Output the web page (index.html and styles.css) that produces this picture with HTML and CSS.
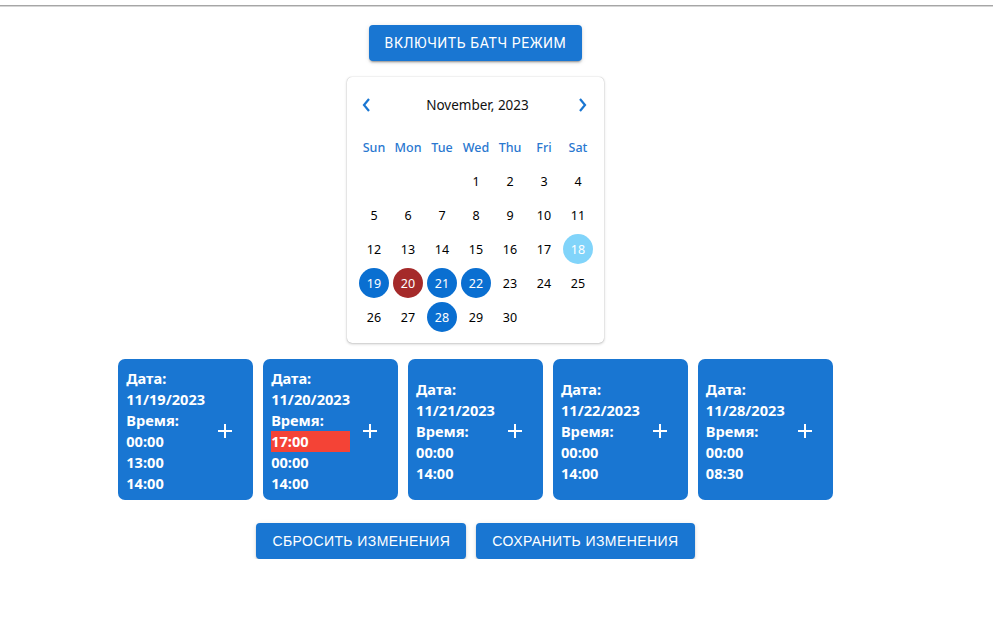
FILE: index.html
```html
<!DOCTYPE html>
<html lang="ru">
<head>
<meta charset="utf-8">
<title>Batch</title>
<link rel="stylesheet" href="styles.css">
</head>
<body>
<div class="topline"></div>
<main class="main">
  <button class="btn btn-top">Включить батч режим</button>

  <div class="calendar">
    <div class="cal-head">
      <span class="nav"><svg width="12" height="16" viewBox="0 0 12 16"><polyline points="8,2 3,8 8,14" fill="none" stroke="#1976d2" stroke-width="2.2"/></svg></span>
      <span class="cal-title">November, 2023</span>
      <span class="nav"><svg width="12" height="16" viewBox="0 0 12 16"><polyline points="4,2 9,8 4,14" fill="none" stroke="#1976d2" stroke-width="2.2"/></svg></span>
    </div>
    <div class="cal-grid">
      <span class="wd">Sun</span><span class="wd">Mon</span><span class="wd">Tue</span><span class="wd">Wed</span><span class="wd">Thu</span><span class="wd">Fri</span><span class="wd">Sat</span>
      <span class="d"></span><span class="d"></span><span class="d"></span>
      <span class="d">1</span><span class="d">2</span><span class="d">3</span><span class="d">4</span>
      <span class="d">5</span><span class="d">6</span><span class="d">7</span><span class="d">8</span><span class="d">9</span><span class="d">10</span><span class="d">11</span>
      <span class="d">12</span><span class="d">13</span><span class="d">14</span><span class="d">15</span><span class="d">16</span><span class="d">17</span><span class="d"><b class="dot today">18</b></span>
      <span class="d"><b class="dot sel">19</b></span><span class="d"><b class="dot err">20</b></span><span class="d"><b class="dot sel">21</b></span><span class="d"><b class="dot sel">22</b></span><span class="d">23</span><span class="d">24</span><span class="d">25</span>
      <span class="d">26</span><span class="d">27</span><span class="d"><b class="dot sel">28</b></span><span class="d">29</span><span class="d">30</span>
    </div>
  </div>

  <div class="cards">
    <div class="card">
      <div class="info">
        <div>Дата:</div><div>11/19/2023</div><div>Время:</div>
        <div>00:00</div><div>13:00</div><div>14:00</div>
      </div>
      <span class="add"><svg width="24" height="24" viewBox="0 0 24 24"><path d="M19 13h-6v6h-2v-6H5v-2h6V5h2v6h6v2z" fill="#fff"/></svg></span>
    </div>
    <div class="card">
      <div class="info">
        <div>Дата:</div><div>11/20/2023</div><div>Время:</div>
        <div class="conflict">17:00</div><div>00:00</div><div>14:00</div>
      </div>
      <span class="add"><svg width="24" height="24" viewBox="0 0 24 24"><path d="M19 13h-6v6h-2v-6H5v-2h6V5h2v6h6v2z" fill="#fff"/></svg></span>
    </div>
    <div class="card">
      <div class="info">
        <div>Дата:</div><div>11/21/2023</div><div>Время:</div>
        <div>00:00</div><div>14:00</div>
      </div>
      <span class="add"><svg width="24" height="24" viewBox="0 0 24 24"><path d="M19 13h-6v6h-2v-6H5v-2h6V5h2v6h6v2z" fill="#fff"/></svg></span>
    </div>
    <div class="card">
      <div class="info">
        <div>Дата:</div><div>11/22/2023</div><div>Время:</div>
        <div>00:00</div><div>14:00</div>
      </div>
      <span class="add"><svg width="24" height="24" viewBox="0 0 24 24"><path d="M19 13h-6v6h-2v-6H5v-2h6V5h2v6h6v2z" fill="#fff"/></svg></span>
    </div>
    <div class="card">
      <div class="info">
        <div>Дата:</div><div>11/28/2023</div><div>Время:</div>
        <div>00:00</div><div>08:30</div>
      </div>
      <span class="add"><svg width="24" height="24" viewBox="0 0 24 24"><path d="M19 13h-6v6h-2v-6H5v-2h6V5h2v6h6v2z" fill="#fff"/></svg></span>
    </div>
  </div>

  <div class="actions">
    <button class="btn btn-wide">Сбросить изменения</button>
    <button class="btn btn-wide">Сохранить изменения</button>
  </div>
</main>
</body>
</html>
```

FILE: styles.css
```css
* { box-sizing: border-box; }
body {
  margin: 0;
  background: #fff;
  font-family: "Noto Sans", "Open Sans", sans-serif;
}
.topline {
  margin-top: 5px;
  height: 2px;
  border-top: 1px solid #a6a6a6;
  border-bottom: 1px solid #d6d6d6;
}
.main {
  width: 951px;
  display: flex;
  flex-direction: column;
  align-items: center;
}
.btn {
  font-family: Roboto, "Liberation Sans", sans-serif;
  font-weight: 400;
  font-size: 14px;
  letter-spacing: 0.4px;
  text-transform: uppercase;
  line-height: 24px;
  color: #fff;
  background: #1976d2;
  border: 0;
  border-radius: 4px;
  padding: 6px 16px;
  height: 36px;
  box-shadow: 0 3px 1px -2px rgba(0,0,0,.2), 0 2px 2px 0 rgba(0,0,0,.14), 0 1px 5px 0 rgba(0,0,0,.12);
}
.btn-top { margin-top: 18px; letter-spacing: 0.6px; }
.btn-wide {
  font-family: "Liberation Sans", Arial, sans-serif;
  letter-spacing: 0.42px;
}

.calendar {
  margin-top: 16px;
  width: 257px;
  height: 266px;
  background: #fff;
  border-radius: 5px;
  box-shadow: 0 1px 3px rgba(0,0,0,.22), 0 0 1px rgba(0,0,0,.3);
  padding: 16px 9px 0 10px;
}
.cal-head {
  height: 24px;
  display: flex;
  align-items: center;
  justify-content: space-between;
  padding: 0 7px 0 4px;
}
.nav { display: flex; width: 12px; height: 16px; }
.cal-title {
  font-size: 13.5px;
  color: #111;
  margin-left: 6px;
}
.cal-grid {
  margin-top: 13px;
  display: grid;
  grid-template-columns: repeat(7, 34px);
  grid-auto-rows: 34px;
}
.wd, .d {
  display: flex;
  align-items: center;
  justify-content: center;
  font-size: 12.5px;
}
.wd { color: #2a78d0; font-weight: 500; }
.d { color: #000; }
.dot {
  width: 30px;
  height: 30px;
  border-radius: 50%;
  display: flex;
  align-items: center;
  justify-content: center;
  color: #fff;
  font-weight: 400;
}
.sel { background: #0a6fd1; }
.err { background: #a52a2a; }
.today { background: #81d4fa; }

.cards {
  margin-top: 16px;
  display: flex;
  gap: 10px;
}
.card {
  background: #1976d2;
  border-radius: 7px;
  padding: 9px 8px 6px 8px;
  display: flex;
  align-items: center;
  color: #fff;
}
.info {
  font-weight: 700;
  font-size: 14.6px;
  line-height: 21px;
}
.conflict { background: #f44336; }
.add {
  width: 40px;
  height: 40px;
  display: flex;
  align-items: center;
  justify-content: center;
}
.actions {
  margin-top: 23px;
  display: flex;
  gap: 10px;
}
```
